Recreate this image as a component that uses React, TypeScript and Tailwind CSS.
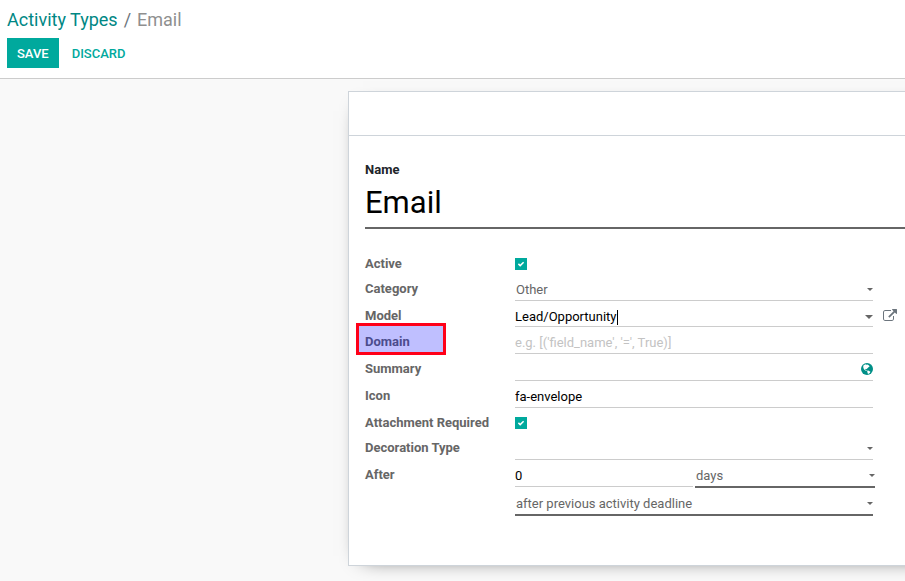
import { useState } from "react";
import type { ReactNode } from "react";

const labelClass = "pt-[7px] text-[13px] leading-4 font-bold text-[#666666]";
const lineClass = "flex w-full items-end border-b border-[#cccccc]";
const textClass = "h-5 w-full min-w-0 bg-transparent text-[13px] leading-5 text-black outline-none";

function Row({ id, label, marked, children }: { id: string; label: string; marked?: boolean; children: ReactNode }) {
  return (
    <>
      <div className="relative">
        <label htmlFor={id} className={`block ${labelClass}`}>
          {label}
        </label>
        {marked && (
          <div className="absolute -top-1 -left-[9px] h-8 w-[90px] border-3 border-[#ff0018] bg-[#0000ff]/25" />
        )}
      </div>
      {children}
    </>
  );
}

function Tick({ id }: { id: string }) {
  return (
    <div className="grid h-[25px] w-3 items-start pt-[9px]">
      <input
        id={id}
        type="checkbox"
        defaultChecked
        className="peer col-start-1 row-start-1 size-3 appearance-none border border-[#666666] bg-white checked:border-[#00a99d] checked:bg-[#00a99d]"
      />
      <svg
        viewBox="0 0 12 12"
        className="pointer-events-none invisible col-start-1 row-start-1 size-3 peer-checked:visible"
        aria-hidden="true"
      >
        <path d="M3.4 5.9 L5.2 7.6 L8.6 4.3" fill="none" stroke="#ffffff" strokeWidth="1.5" />
      </svg>
    </div>
  );
}

function Caret({ large }: { large?: boolean }) {
  return (
    <svg
      viewBox="0 0 8 4"
      className={`pointer-events-none shrink-0 ${large ? "h-1 w-2" : "h-[3px] w-1.5"}`}
      aria-hidden="true"
    >
      <path d="M0 0 H8 L4 4 Z" fill="#666666" />
    </svg>
  );
}

function Globe() {
  return (
    <svg viewBox="0 0 12 12" className="size-3" aria-hidden="true">
      <circle cx="6" cy="6" r="6" fill="#008f87" />
      <path
        d="M2.4 2.6 L4 1.4 L5.4 1.2 L5.2 2 L6.4 1.5 L8 2.4 L8.6 3.4 L7.8 4 L7.2 4.6 L6.2 5.4 L5.6 6.2 L5 5.8 L4.2 6.2 L4.6 7 L5.6 7.2 L5.8 8 L4.8 7.8 L3.4 6.8 L2.6 5.4 L2.2 4 Z"
        fill="#ffffff"
      />
      <path d="M6 7.8 L7.2 7.4 L8.6 8.2 L9.4 8.8 L8.8 10 L7.2 11 L6.6 10.2 L6.4 9 Z" fill="#ffffff" />
    </svg>
  );
}

function Dropdown({
  id,
  value,
  heavy,
  name,
}: {
  id: string;
  value: string;
  heavy?: boolean;
  name?: string;
}) {
  return (
    <div
      className={`grid w-full items-end ${heavy ? "border-b-2 border-[#666666]" : "border-b border-[#cccccc]"}`}
    >
      <select
        id={id}
        aria-label={name}
        className="col-start-1 row-start-1 h-5 w-full appearance-none bg-transparent pl-px text-[13px] leading-5 text-[#666666] outline-none"
      >
        <option>{value}</option>
      </select>
      <span className="pointer-events-none col-start-1 row-start-1 flex h-5 items-center justify-self-end pb-0.5">
        <Caret />
      </span>
    </div>
  );
}

export default function App() {
  const [model, setModel] = useState("Lead/Opportunity");

  return (
    <div className="flex min-h-screen flex-col overflow-hidden bg-[#f9f9f9] font-[Roboto,sans-serif] text-[13px]">
      <header className="border-b border-[#cccccc] bg-white px-[7px] pt-2 pb-2.5">
        <nav className="flex gap-1.5 text-lg leading-6" aria-label="Breadcrumb">
          <a href="#types" className="text-[#008784]">
            Activity Types
          </a>
          <span className="text-[#6c757d]">/</span>
          <span className="text-[#8f8f8f]">Email</span>
        </nav>
        <div className="mt-1.5 flex gap-[3px] font-medium">
          <button type="button" className="h-[30px] bg-[#00a99d] px-2.5 pt-0.5 text-white">
            SAVE
          </button>
          <button type="button" className="h-[30px] px-2.5 pt-0.5 text-[#00a99d]">
            DISCARD
          </button>
        </div>
      </header>

      <main className="flex-1 pt-3 pb-[15px] pl-[348px]">
        <form className="-mr-12 border border-[#ced4da] bg-white pb-[49px] shadow-[0_5px_20px_-15px_black]">
          <div className="h-11 border-b border-[#ced4da]" />
          <div className="pr-11 pl-4">
            <div className="pt-[25px]">
              <label htmlFor="name" className="block text-[13px] leading-[18px] font-bold text-[#212529]">
                Name
              </label>
              <input
                id="name"
                defaultValue="Email"
                className="h-[50px] w-full border-b-2 border-[#666666] bg-transparent pb-0.5 text-[31px] text-black outline-none"
              />
            </div>

            <div className="mt-5 grid grid-cols-[150px_minmax(0,358px)_32px]">
              <Row id="active" label="Active">
                <Tick id="active" />
                <span />
              </Row>
              <Row id="category" label="Category">
                <div className="flex h-[27px] items-end">
                  <Dropdown id="category" value="Other" />
                </div>
                <span />
              </Row>
              <Row id="model" label="Model">
                <div className="flex h-[26px] items-end">
                  <div className={lineClass}>
                    <div className="flex h-[18px] flex-1 items-center">
                      <input
                        id="model"
                        value={model}
                        onChange={(e) => setModel(e.target.value)}
                        className="field-sizing-content h-[18px] bg-transparent text-[13px] leading-[18px] text-black outline-none"
                      />
                      <span className="h-[15px] w-px bg-black" />
                    </div>
                    <span className="flex h-[18px] items-center">
                      <Caret large />
                    </span>
                  </div>
                </div>
                <button type="button" aria-label="External link" className="h-[26px] w-8 pt-1 pl-2.5 text-[#6c757d]">
                  <svg viewBox="0 0 1792 1792" className="size-[14px]" fill="currentColor">
                    <path d="M1408 928v320q0 119-84.500 203.500t-203.500 84.500h-832q-119 0-203.500-84.500t-84.500-203.500v-832q0-119 84.500-203.500t203.500-84.500h704q14 0 23 9t9 23v64q0 14-9 23t-23 9h-704q-66 0-113 47t-47 113v832q0 66 47 113t113 47h832q66 0 113-47t47-113v-320q0-14 9-23t23-9h64q14 0 23 9t9 23zm384-864v512q0 26-19 45t-45 19-45-19l-176-176-652 652q-10 10-23 10t-23-10l-114-114q-10-10-10-23t10-23l652-652-176-176q-19-19-19-45t19-45 45-19h512q26 0 45 19t19 45z" />
                  </svg>
                </button>
              </Row>
              <Row id="domain" label="Domain" marked>
                <div className="flex h-[27px] items-end">
                  <div className={lineClass}>
                    <input
                      id="domain"
                      placeholder="e.g. [('field_name', '=', True)]"
                      className={`${textClass} placeholder:text-[#c3c3c3]`}
                    />
                  </div>
                </div>
                <span />
              </Row>
              <Row id="summary" label="Summary">
                <div className="flex h-[27px] items-end">
                  <div className={lineClass}>
                    <input id="summary" className={textClass} />
                    <button type="button" aria-label="Translate" className="flex h-5 items-center pb-0.5">
                      <Globe />
                    </button>
                  </div>
                </div>
                <span />
              </Row>
              <Row id="icon" label="Icon">
                <div className="flex h-[27px] items-end">
                  <div className={lineClass}>
                    <input id="icon" defaultValue="fa-envelope" className={textClass} />
                  </div>
                </div>
                <span />
              </Row>
              <Row id="attachment" label="Attachment Required">
                <Tick id="attachment" />
                <span />
              </Row>
              <Row id="decoration" label="Decoration Type">
                <div className="flex h-[27px] items-end">
                  <Dropdown id="decoration" value="" />
                </div>
                <span />
              </Row>
              <Row id="after" label="After">
                <div>
                  <div className="-mr-0.5 flex h-7 items-end gap-0.5">
                    <div className="flex flex-1 pb-px">
                      <div className={lineClass}>
                        <input id="after" defaultValue="0" className={textClass} />
                      </div>
                    </div>
                    <div className="w-[180px] shrink-0">
                      <Dropdown id="unit" name="Delay unit" value="days" heavy />
                    </div>
                  </div>
                  <div className="flex h-7 items-end">
                    <Dropdown id="from" name="Delay from" value="after previous activity deadline" heavy />
                  </div>
                </div>
                <span />
              </Row>
            </div>
          </div>
        </form>
      </main>
    </div>
  );
}
